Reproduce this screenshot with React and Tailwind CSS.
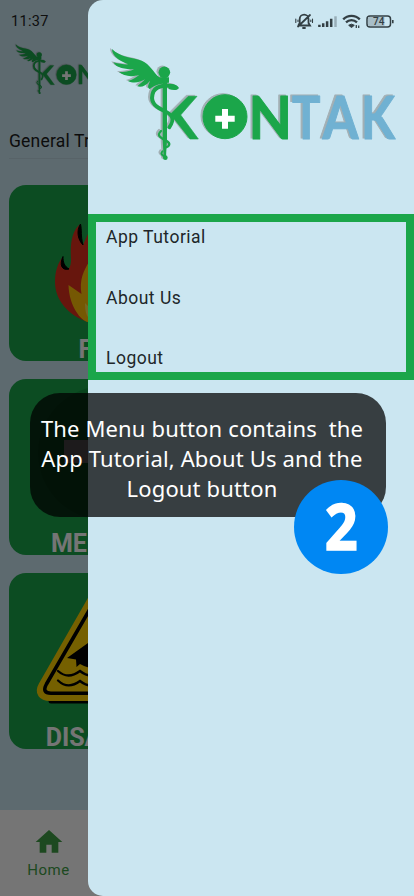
import React from "react";

const WING =
  "M36 27 C60 52 95 52 125 62 C150 72 160 97 178 112 L207 112 L207 128 C185 130 165 134 150 147 C138 143 148 131 150 122 C138 138 125 142 112 139 C118 132 130 125 135 118 C120 128 100 131 84 123 C100 118 112 110 118 104 C95 112 72 109 57 96 C75 97 95 92 102 88 C75 88 50 85 40 67 C60 72 75 74 85 73 C60 62 36 50 36 27Z";

function Emblem() {
  return (
    <g transform="translate(100 40) scale(.3333)" fill="#1ba64a">
      <path d={WING} />
      <circle cx="193" cy="97" r="17.5" />
      <path d="M188 118 H201 V300 L198 350 H191 L188 300Z" />
      <g fill="none" stroke="#1ba64a" strokeLinecap="round">
        <path d="M226 142 C205 132 172 135 160 155 C148 185 165 200 190 211" strokeWidth="12" />
        <path d="M190 211 C216 222 226 237 208 262" strokeWidth="11" />
        <path d="M183 273 C168 287 185 296 199 302 C214 310 208 320 196 323" strokeWidth="7" />
        <path d="M187 334 C180 342 188 346 196 352" strokeWidth="6" />
      </g>
      <path d="M205 133 C218 130 232 135 237 144 C230 153 217 151 206 147Z" />
      <circle cx="196" cy="353" r="7" />
      <path d="M265 169 H291 L242 225 L295 297 H270 L222 236 L212 222Z" stroke="#1ba64a" strokeWidth="2" strokeLinejoin="round" />
    </g>
  );
}

function Letters() {
  return (
    <g
      fontFamily="Lato, sans-serif"
      fontWeight="700"
      fontSize="59"
      strokeWidth="1"
      strokeLinejoin="round"
    >
      <g fill="#1ba64a" stroke="#1ba64a">
        <circle cx="225" cy="116.700" r="22" />
        <text x="248.500" y="138.500" textLength="43.500" lengthAdjust="spacingAndGlyphs">N</text>
      </g>
      <g fill="#70b1d2" stroke="#70b1d2">
        <text x="292" y="138.500" textLength="28.500" lengthAdjust="spacingAndGlyphs">T</text>
        <text x="322.500" y="138.500" textLength="36" lengthAdjust="spacingAndGlyphs">A</text>
        <text x="361" y="138.500" textLength="34" lengthAdjust="spacingAndGlyphs">K</text>
      </g>
    </g>
  );
}

function Logo({ className }) {
  return (
    <svg viewBox="108 44 292 120" className={className}>
      <g className="drop-shadow-[-1.8px_-1px_0.4px_#a2afb4]">
        <Emblem />
        <Letters />
      </g>
      <path d="M222 109h6v6.800h6.700v6H228v6.900h-6v-6.900h-6.700v-6H222z" fill="#fff" />
    </svg>
  );
}

function StatusIcons() {
  return (
    <svg viewBox="290 8 110 28" className="h-7 w-[110px]" fill="none" stroke="#333f44">
      <g strokeWidth="1.800" strokeLinecap="round">
        <path d="M300 25.500h10l-1.500-2.500v-4a4.400 4.400 0 0 0-8.800 0v4l-1.300 2.500M298 26.500l12-11.500M303 28h2" />
        <path d="M295.800 19v3.500M298 20v1.500M310.800 20v1.500M312.500 19v3.500" strokeWidth="1.100" />
      </g>
      <g strokeWidth="2.500">
        <path d="M319.400 24.800v2.200M323.200 23.300v3.700M327.100 21.300v5.700M331.200 18.800v8.200" />
        <path d="M335.500 16.300v10.700" stroke="#98aeb8" />
      </g>
      <g strokeWidth="2.300">
        <path d="M343.200 19.400a11.500 11.500 0 0 1 16.600 0M346 22.400a8 8 0 0 1 11 0" />
        <path d="M348.700 25.300a4.400 4.400 0 0 1 5.600 0L351.500 27.500z" fill="#333f44" strokeWidth="1" />
        <path d="M356.300 25v3M358.700 25.500v2.500" strokeWidth="1.300" />
      </g>
      <rect x="367" y="16" width="23.500" height="11" rx="3" strokeWidth="1.500" />
      <path d="M368 17h16.500v9H368z" fill="#a8bec8" stroke="none" />
      <path d="M392.800 20v3.300" strokeWidth="1.600" />
      <text x="378.700" y="25.200" textAnchor="middle" fontFamily="Roboto, sans-serif" fontSize="10" fontWeight="500" fill="#333f44" stroke="none">
        74
      </text>
    </svg>
  );
}

function FireArt() {
  return (
    <svg viewBox="0 0 192 176" className="h-[176px] w-[192px] shrink-0">
      <path
        d="M79 137 C58 130 46 114 46 97 C46 86 49 78 53.700 71.700 C52 79 54 84 59.300 84.500 C62 81 62 77 62 74 C61 58 63 46 71 39 C68 47 70 54 74 60 C78 50 84 38 94 31 C93 50 112 56 116 72 C120 68 121 63 119 58 C132 68 144 83 144 100 C144 121 130 137 96 138Z"
        fill="#e0301e"
      />
      <path d="M71.500 39 C67 46 69 55 74 60 C71.500 51 73 45 71.500 39ZM54 71.500 C50 80 53 86 60 84 C55 81 54 77 54 71.500Z" fill="#000" stroke="#000" />
      <path d="M79 137 C72 136 60 121 59.500 100 L72.500 109 C70 95 75 85 80 77 C83 86 98 84 104 96 C107 105 108 108 107 114 C111 112 113 108 113 104 C124 120 114 138 88 138Z" fill="#ffc107" />
      <path d="M87 138 C77 134 76 127 76 118 L82 124 C85 113 93 107 98 101 C98 116 109 123 101 138Z" fill="#ffe04d" />
    </svg>
  );
}

function MedicalArt() {
  return (
    <svg viewBox="0 0 192 176" className="h-[176px] w-[192px] shrink-0">
      <circle cx="96" cy="74" r="67" fill="#149541" />
      <path d="M84 32h24v29h22v23h-22v29H84V84H55V61h29z" fill="#e9dfe2" />
    </svg>
  );
}

function DisasterArt() {
  return (
    <svg viewBox="0 0 192 176" className="h-[176px] w-[192px] shrink-0">
      <path d="M42 128 H150" stroke="#000" strokeWidth="5" strokeLinecap="round" />
      <path d="M36 114 L91 18 Q96 10 101 18 L156 114 Q160 121 151 121 H41 Q32 121 36 114Z" fill="#ffd200" stroke="#ffd200" strokeWidth="14" strokeLinejoin="round" />
      <path d="M37.500 111 L92 17 Q96 10 100 17 L154.500 111 Q159 120.200 150 120.200 H42 Q32.500 120.200 37.500 111Z" fill="none" stroke="#000" strokeWidth="3.600" />
      <path d="M58 85 L79 70 L96 60 L132 86 L124 88 V96 H84 L75 93 L71 91 L67.500 94 L67 86.500Z" fill="#000" />
      <path d="M49 98 Q59 107 71 98 Q82 107 94 98 Q106 107 118 98 M49 107.500 Q59 117 71 108 Q82 117 94 108 Q106 117 118 108" fill="none" stroke="#000" strokeWidth="2.300" strokeLinecap="round" />
    </svg>
  );
}

function Card({ label, children }) {
  return (
    <div className="flex h-[176px] w-[192px] shrink-0 flex-col overflow-hidden rounded-[17px] bg-[#1ba64a]">
      {children}
      <span className="-mt-[23px] pr-[2px] text-center text-[25px] leading-[24px] font-bold text-white">
        {label}
      </span>
    </div>
  );
}

function HomePage() {
  return (
    <div className="flex h-full flex-col bg-[#cbe6f1]">
      <header className="flex h-[185px] shrink-0 flex-col pl-[9px]">
        <div className="h-[42px] pt-[12px] pl-[2px] text-[14.500px] leading-5 tracking-[0.300px] text-[#222]">11:37</div>
        <Logo className="ml-[4.500px] h-[54px] w-[131px]" />
        <h1 className="mt-[32px] text-[17.500px] leading-[26px] tracking-[0.200px] text-[#1c1c1c]">General Triage</h1>
        <div className="mt-[4px] h-px w-[396px] bg-[#bfd8e3]" />
      </header>
      <main className="flex grow flex-col gap-[18px] pl-[9px]">
        <Card label="FIRE"><FireArt /></Card>
        <Card label="MEDICAL"><MedicalArt /></Card>
        <Card label="DISASTER"><DisasterArt /></Card>
      </main>
      <nav className="flex h-[86px] shrink-0 bg-white text-[#419f46]">
        <div className="flex w-[97px] flex-col items-center pt-[16px]">
          <svg viewBox="0 0 24 24" className="h-8 w-8" fill="currentColor">
            <path d="M10 20v-6h4v6h5v-8h3L12 3 2 12h3v8z" />
          </svg>
          <span className="mt-[2px] text-[15px] leading-5 tracking-[0.500px]">Home</span>
        </div>
      </nav>
    </div>
  );
}

function Drawer() {
  return (
    <aside className="absolute inset-y-0 right-0 flex w-[326px] flex-col rounded-l-[15px] bg-[#cbe6f1]">
      <div className="flex h-[44px] justify-end pt-[8px] pr-[14px]">
        <StatusIcons />
      </div>
      <Logo className="ml-5 h-[120px] w-[292px] shrink-0" />
      <ul className="mt-[50px] flex h-[166px] flex-col justify-between border-8 border-[#1ba64a] pt-[2px] pb-px pl-[10px] text-[17.500px] leading-[26px] tracking-[0.500px] text-[#202629]">
        <li>App Tutorial</li>
        <li>About Us</li>
        <li>Logout</li>
      </ul>
    </aside>
  );
}

export default function App() {
  return (
    <div className="relative h-[896px] w-[414px] overflow-hidden font-['Roboto',sans-serif]">
      <HomePage />
      <div className="absolute inset-0 bg-black/54" />
      <Drawer />
      <div className="absolute top-[393px] left-[30px] h-[124px] w-[356px] rounded-[30px] bg-black/73 pt-[20px] pr-[12px] text-center font-['Noto_Sans',sans-serif] text-[22px] leading-[30px] tracking-[0.150px] whitespace-pre text-white">
        <p>The Menu button contains  the</p>
        <p>App Tutorial, About Us and the</p>
        <p>Logout button</p>
      </div>
      <div className="absolute top-[480px] left-[294px] flex h-[94px] w-[94px] items-center justify-center rounded-full bg-[#0087f3] pb-[2px] font-['Noto_Sans',sans-serif] text-[64px] leading-none font-bold text-white">
        <span className="scale-x-90 [-webkit-text-stroke:1.5px_white]">2</span>
      </div>
    </div>
  );
}
